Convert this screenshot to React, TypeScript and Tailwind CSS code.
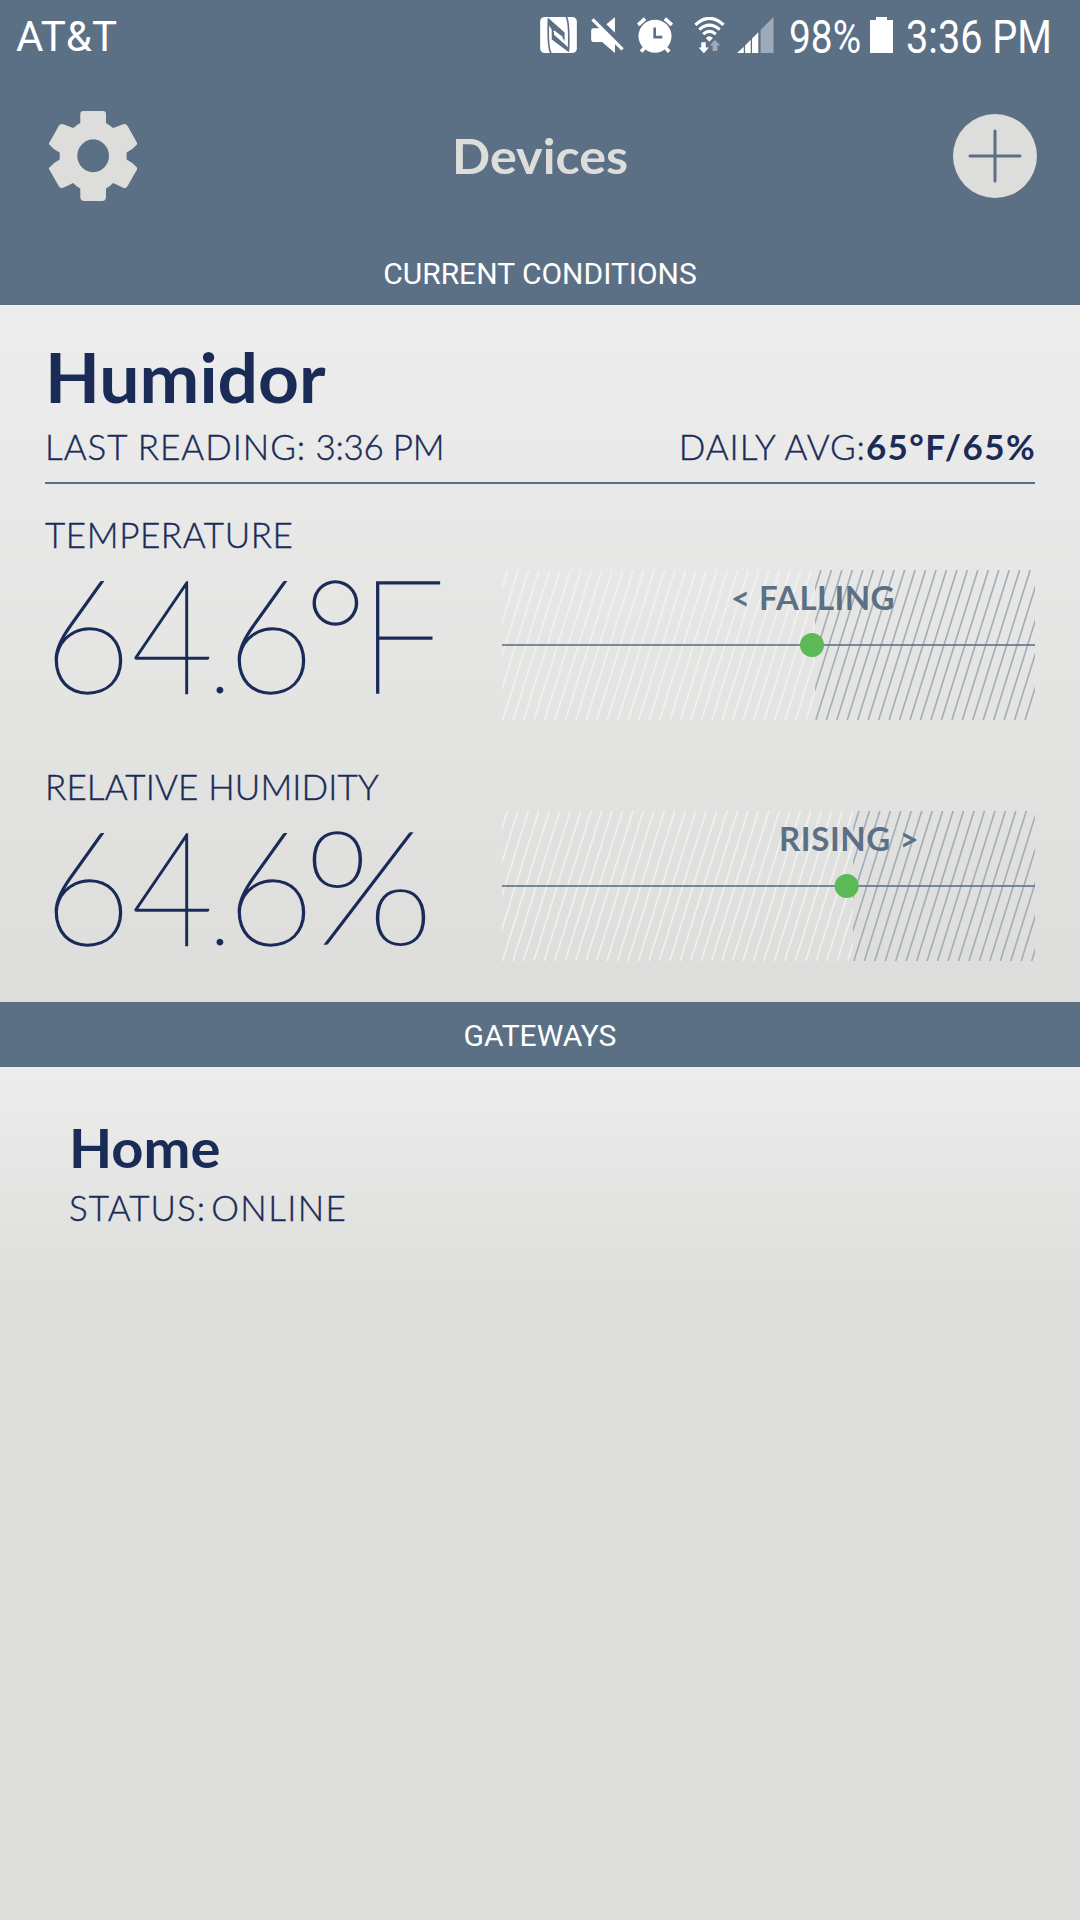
import React from "react";

function NfcIcon() {
  return (
    <svg className="h-9 w-[37px]" viewBox="30 50 111 109">
      <rect x="30" y="50" width="111" height="109" rx="14" fill="#fff" />
      <path fill="none" stroke="#5c7085" strokeWidth="5" d="M63 160 Q52 146 55 55" />
      <path fill="none" stroke="#5c7085" strokeWidth="5" d="M109 49 Q119 64 116 152" />
      <path fill="#5c7085" d="M54 52 L104 97 V122 L98 118 V110 L72 90 V104 L117 144 V157 L65 118 V88 L54 72Z" />
      <path fill="none" stroke="#fff" strokeWidth="3" d="M70 94 L102 120" />
    </svg>
  );
}

function MuteIcon() {
  return (
    <svg className="h-9 w-[33px]" viewBox="183 50 99 109">
      <path fill="#fff" d="M255 51 V98 L229 72Z M190 84 H214 L255 125 V159 L216 126 H190 Q183 126 183 119 V91 Q183 84 190 84Z" />
      <path stroke="#fff" strokeWidth="10" d="M187 57 L278 148" />
    </svg>
  );
}

function AlarmIcon() {
  return (
    <svg className="h-9 w-9" viewBox="321 50 108 109">
      <circle cx="375" cy="108" r="50" fill="#fff" />
      <path stroke="#fff" strokeWidth="11" fill="none" d="M324 74 L345 55 M426 74 L405 55 M333 155 L346 140 M418 155 L404 140" />
      <path stroke="#5c7085" strokeWidth="8" fill="none" d="M374 82 V111 H397" />
    </svg>
  );
}

function WifiIcon() {
  return (
    <svg className="h-9 w-[31px]" viewBox="492 48 93 111">
      <g fill="none" stroke="#fff" strokeWidth="9.5">
        <path d="M495 72 Q538 32 582 72" />
        <path d="M507 87 Q538 59 570 87" />
        <path d="M519 101 Q538 84 558 101" />
      </g>
      <path fill="#fff" d="M527 113 Q538 102 549 113 L538 124Z M513 126 H527 V142 H537 L521 160 L505 142 H513Z" />
      <path fill="#9eaab7" d="M555 119 L572 136 H563 V153 H548 V136 H539Z" />
    </svg>
  );
}

function SignalIcon() {
  return (
    <svg className="h-9 w-[37px]" viewBox="622 50 111 109">
      <path fill="#fff" d="M622 159 L642 140 V159Z M646 159 V136 L663 119 V159Z M667 159 V115 L686 96 V159Z" />
      <path fill="#9eaab7" d="M693 159 V89 L732 50 V159Z" />
    </svg>
  );
}

function GearIcon() {
  const half =
    "M94 111 H83.6 Q80.6 111 80.6 114 V123 Q77 125 73.5 128 L63.5 124.2 Q60.6 123.2 59 126 L49 143.8 Q53 149 60 152.5 V159.5 Q53 163 49 168.4 L59 186 Q60.6 189 63.5 187.8 L73.5 183 Q77 187 80.6 188.5 V197.5 Q81 201 84.6 201 H94 V172.3 A16.4 16.5 0 0 1 94 139.3Z";
  return (
    <svg className="h-[90px] w-[88px]" viewBox="49.3 111 88 90">
      <path fill="#dddddb" d={half} />
      <path fill="#dddddb" transform="matrix(-1 0 0 1 186.9 0)" d={half} />
    </svg>
  );
}

function SectionBar({ children }: { children: string }) {
  return (
    <div className="flex h-[65px] items-center justify-center bg-[#5c7085] pt-[2px] text-[30px] leading-none text-white [font-family:Roboto,sans-serif]">
      {children}
    </div>
  );
}

type TrendProps = { split: number; value: number; start: number; children: React.ReactNode };

function TrendChart({ split, value, start, children }: TrendProps) {
  const id = "trend-" + split;
  const lines = (from: number, to: number) => {
    let d = "";
    for (let x = from - 52.3; x < to; x += 10.46) d += `M${x.toFixed(2)} 150l46.9 -150`;
    return d;
  };
  return (
    <div className="relative h-[150px] w-[533px]">
      <svg className="block h-full w-full" viewBox="0 0 533 150">
        <clipPath id={id + "-a"}><rect width={split} height="150" /></clipPath>
        <clipPath id={id + "-b"}><rect x={split} width={533 - split} height="150" /></clipPath>
        <path clipPath={`url(#${id}-a)`} d={lines(start, split)} stroke="#f1f1f0" strokeWidth="1.6" />
        <path clipPath={`url(#${id}-b)`} d={lines(split + 0.9, 533)} stroke="#a2adb8" strokeWidth="1.6" />
        <rect y="74" width="533" height="2" fill="#5c7085" opacity="0.78" />
        <circle cx={value} cy="75" r="12" fill="#5bb956" />
      </svg>
      {children}
    </div>
  );
}

function Reading({ unit }: { unit: string }) {
  return (
    <div className="mt-4 -ml-[2px] h-[120px] whitespace-nowrap text-[158px] leading-[121px] font-thin [-webkit-text-stroke:1.5px_#1a2b57]">
      <span className="mr-[-4px] inline-block origin-left scale-x-[0.97]">6</span>
      <span className="mr-[-17.5px] inline-block origin-left scale-x-90">4</span>
      <span className="mr-[-6px] ml-[3px] text-[105px] leading-none [-webkit-text-stroke:0]">.</span>
      {unit === "%" ? (
        <>
          <span className="mr-[-14px] inline-block origin-left scale-x-[0.97]">6</span>
          <span className="inline-block origin-left scale-x-[1.08]">%</span>
        </>
      ) : (
        <>
          <span className="mr-[-15px] inline-block origin-left scale-x-[0.97]">6</span>
          <span className="tracking-[-9.4px]">°</span>
          <span className="inline-block origin-left scale-x-[0.97]">F</span>
        </>
      )}
    </div>
  );
}

export default function App() {
  return (
    <div className="flex h-[1920px] w-[1080px] flex-col overflow-hidden bg-[#dddddb] text-[#1a2b57] [font-family:Lato,sans-serif]">
      <header className="h-60 bg-[#5c7085]">
        <div className="flex h-[73px] items-center pr-[30px] pl-4 leading-none text-white [font-family:Roboto,sans-serif]">
          <span className="text-[42px]">AT&amp;T</span>
          <div className="ml-auto flex items-center">
            <div className="mt-[-3px] flex items-center">
              <NfcIcon />
              <div className="ml-[14px]"><MuteIcon /></div>
              <div className="ml-[13px]"><AlarmIcon /></div>
              <div className="ml-[21px]"><WifiIcon /></div>
              <div className="ml-3"><SignalIcon /></div>
            </div>
            <span className="ml-[15px] w-[73px] origin-left scale-x-[0.845] text-[46px] whitespace-nowrap">98%</span>
            <svg className="mt-[-3px] ml-2 h-9 w-[23px]" viewBox="0 0 23 36">
              <path fill="#fff" d="M6 0H17V3H23V36H0V3H6Z" />
            </svg>
            <span className="ml-[13px] w-36 origin-left scale-x-[0.8625] text-[46px] whitespace-nowrap">3:36 PM</span>
          </div>
        </div>
        <div className="flex h-[166px] items-center justify-between pr-[43px] pl-[49px]">
          <GearIcon />
          <h1 className="mt-[-1px] ml-[-10px] scale-x-[1.048] text-[48px] leading-none font-bold text-[#dddddb]">Devices</h1>
          <svg className="h-[84px] w-[84px]" viewBox="0 0 84 84">
            <circle cx="42" cy="42" r="42" fill="#dddddb" />
            <path d="M42 17V67M17 42H67" stroke="#5c7085" strokeWidth="3" strokeLinecap="round" />
          </svg>
        </div>
      </header>
      <SectionBar>CURRENT CONDITIONS</SectionBar>
      <section className="h-[697px] bg-linear-to-b from-[#ededed] to-[#dddddb] px-[45px] pt-[31px]">
        <h2 className="origin-left scale-x-[1.05] text-[68px] leading-[82px] font-bold">Humidor</h2>
        <div className="mt-[7px] flex h-[43px] justify-between text-[35px] leading-[43px] font-light">
          <span className="[-webkit-text-stroke:0.4px_#1a2b57]">
            <span className="tracking-[0.95px]">LAST READING:</span>
            <span className="tracking-[-0.3px]"> 3:36 PM</span>
          </span>
          <span className="flex">
            <span className="tracking-[0.9px] [-webkit-text-stroke:0.4px_#1a2b57]">DAILY AVG:</span>
            <span className="mr-[-1px] font-bold tracking-[1.4px]">65°F/65%</span>
          </span>
        </div>
        <div className="mt-[14px] h-[2px] bg-[#5c7085]" />
        <div className="flex h-[252px]">
          <div className="w-[457px] shrink-0 pt-[29px]">
            <div className="text-[35px] leading-[43px] font-light tracking-[0.6px] [-webkit-text-stroke:0.4px_#1a2b57]">TEMPERATURE</div>
            <Reading unit="°F" />
          </div>
          <div className="pt-[86px]">
            <TrendChart split={313} value={310} start={0.7}>
              <div className="absolute top-[5px] left-[229px] text-[33px] leading-[44px] font-bold tracking-[0.4px] whitespace-nowrap text-[#5c7085]">&lt; FALLING</div>
            </TrendChart>
          </div>
        </div>
        <div className="flex h-[252px]">
          <div className="w-[457px] shrink-0 pt-[29px]">
            <div className="text-[35px] leading-[43px] font-light tracking-[0.15px] [-webkit-text-stroke:0.4px_#1a2b57]">RELATIVE HUMIDITY</div>
            <Reading unit="%" />
          </div>
          <div className="pt-[75px]">
            <TrendChart split={351} value={344.7} start={0.4}>
              <div className="absolute top-[5px] left-[277px] text-[33px] leading-[44px] font-bold tracking-[0.6px] whitespace-nowrap text-[#5c7085]">RISING &gt;</div>
            </TrendChart>
          </div>
        </div>
      </section>
      <SectionBar>GATEWAYS</SectionBar>
      <section className="h-[235px] bg-linear-to-b from-[#ededed] to-[#dddddb] pt-[48px] pl-[70px]">
        <h2 className="ml-[-1px] origin-left scale-x-[1.038] text-[54px] leading-[66px] font-bold">Home</h2>
        <div className="mt-[5px] flex text-[35px] leading-[43px] font-light [-webkit-text-stroke:0.4px_#1a2b57]">
          <span className="ml-[-1px] tracking-[1.05px]">STATUS:</span>
          <span className="ml-[5px] tracking-[1.4px]">ONLINE</span>
        </div>
      </section>
    </div>
  );
}
